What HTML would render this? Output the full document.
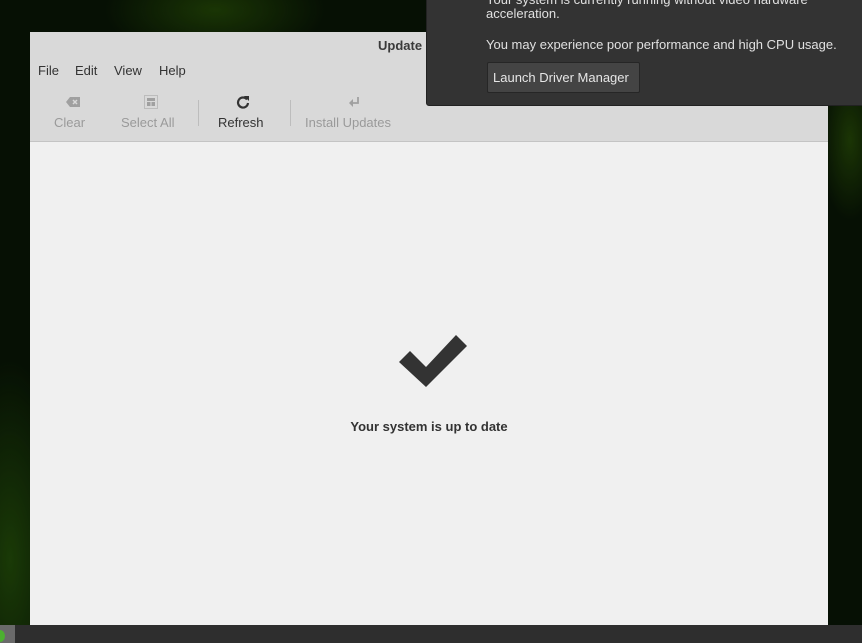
<!DOCTYPE html>
<html><head><style>
*{margin:0;padding:0;box-sizing:border-box}
body{width:862px;height:643px;overflow:hidden;position:relative;font-family:"Liberation Sans","DejaVu Sans",sans-serif;
background:radial-gradient(ellipse 110px 50px at 215px 10px,#1a3505,transparent),radial-gradient(ellipse 60px 200px at 10px 560px,#1a3a07,transparent),radial-gradient(ellipse 30px 80px at 850px 140px,#1b3505,transparent),#061004;}
.win{position:absolute;left:30px;top:32px;width:798px;height:593px;background:#d9d9d9;}
.title{position:absolute;left:348px;top:6px;font-size:13px;font-weight:bold;color:#3a3a3a}
.menu{position:absolute;top:31px;font-size:13px;color:#333}
.tb{position:absolute;top:83px;font-size:13px;color:#9a9a9a;text-align:center}
.ic{position:absolute;top:63px}
.sep{position:absolute;top:68px;width:1px;height:26px;background:#bdbdbd}
.content{position:absolute;left:0;top:109px;width:798px;height:484px;background:#f0f0f0;border-top:1px solid #c4c4c4}
.msg{position:absolute;left:0;width:798px;top:277px;text-align:center;font-size:13px;font-weight:bold;color:#333}
.pop{position:absolute;left:426px;top:-5px;width:440px;height:111px;background:#333;border:1px solid #222;border-radius:0 0 0 3px;color:#e0e0e0;font-size:13px}
.btn{position:absolute;left:60px;top:66px;width:153px;height:31px;background:#444;border:1px solid #262626;border-radius:2px;line-height:29px;padding-left:5px;color:#e6e6e6}
.task{position:absolute;left:0;top:625px;width:862px;height:18px;background:#2e2e2e}
</style></head><body>
<div class="win">
<div class="title">Update</div>
<div class="menu" style="left:8px">File</div>
<div class="menu" style="left:45px">Edit</div>
<div class="menu" style="left:84px">View</div>
<div class="menu" style="left:129px">Help</div>
<svg class="ic" style="left:35px" width="16" height="14" viewBox="0 0 16 14"><path d="M5 2h10v10H5L1 7z" fill="#a0a0a0"/><path d="M8 5l4 4M12 5l-4 4" stroke="#d9d9d9" stroke-width="1.5"/></svg>
<div class="tb" style="left:24px">Clear</div>
<svg class="ic" style="left:114px" width="14" height="14" viewBox="0 0 14 14"><rect x="0.5" y="0.5" width="13" height="13" fill="none" stroke="#a0a0a0" stroke-dasharray="1 1"/><rect x="3" y="3" width="8" height="3" fill="#a0a0a0"/><rect x="3" y="7" width="3.5" height="4" fill="#a0a0a0"/><rect x="7.5" y="7" width="3.5" height="4" fill="#a0a0a0"/></svg>
<div class="tb" style="left:91px">Select All</div>
<div class="sep" style="left:168px"></div>
<svg class="ic" style="left:206px" width="14" height="14" viewBox="0 0 14 14"><path d="M11 4.5A5 5 0 1 0 12 8" fill="none" stroke="#333" stroke-width="2.2"/><path d="M8 1h5v5z" fill="#333"/></svg>
<div class="tb" style="left:188px;color:#333">Refresh</div>
<div class="sep" style="left:260px"></div>
<svg class="ic" style="left:317px" width="14" height="14" viewBox="0 0 14 14"><path d="M11 2v6H4" fill="none" stroke="#a0a0a0" stroke-width="1.8"/><path d="M6 4L2 8l4 4z" fill="#a0a0a0"/></svg>
<div class="tb" style="left:275px">Install Updates</div>
<div class="content">
<svg style="position:absolute;left:0;top:0" width="798" height="300"><polygon points="369,220 380,209 396,225 426,193 437,204 396,245" fill="#333"/></svg>
<div class="msg">Your system is up to date</div>
</div>
</div>
<div class="pop">
<div style="position:absolute;left:59px;top:-4px">Your system is currently running without video hardware</div>
<div style="position:absolute;left:59px;top:10px">acceleration.</div>
<div style="position:absolute;left:59px;top:41px">You may experience poor performance and high CPU usage.</div>
<div class="btn">Launch Driver Manager</div>
</div>
<div class="task"><div style="position:absolute;left:0;top:0;width:15px;height:18px;background:#6a6a6a"></div><div style="position:absolute;left:-5px;top:5px;width:10px;height:12px;border-radius:50%;background:#4caf30"></div></div>
</body></html>
